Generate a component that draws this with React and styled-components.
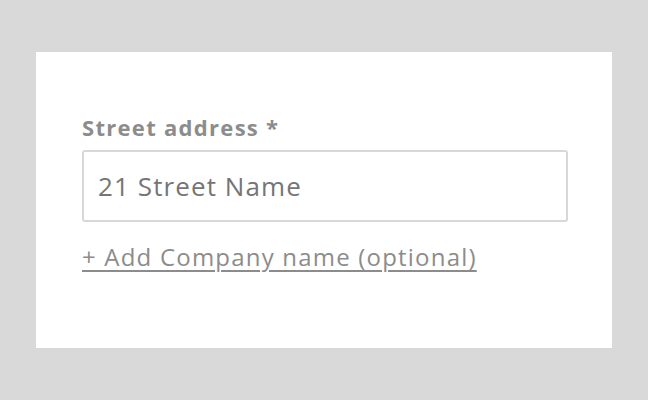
import React from "react";
import styled, { createGlobalStyle } from "styled-components";

const GlobalStyle = createGlobalStyle`
	html, body {
		margin: 0;
		padding: 0;
		background: #d9d9d9;
		font-family: "Open Sans", "Liberation Sans", sans-serif;
	}
`;

const Page = styled.div`
	padding: 52px 36px;
	width: 648px;
	height: 400px;
	box-sizing: border-box;
`;

const Card = styled.div`
	background: #fff;
	height: 296px;
	box-sizing: border-box;
	padding: 60px 44px 0 46px;
	display: flex;
	flex-direction: column;
`;

const Label = styled.label`
	font-size: 22px;
	font-weight: 700;
	letter-spacing: 1.3px;
	color: #8c8c8c;
	line-height: 30px;
	margin-bottom: 8px;
`;

const Input = styled.input`
	height: 72px;
	box-sizing: border-box;
	border: 2px solid #d8d8d8;
	border-radius: 3px;
	padding: 0 14px;
	font-family: inherit;
	font-size: 26px;
	letter-spacing: 1.1px;
	color: #555;
	outline: none;

	::placeholder {
		color: #8c8c8c;
	}
`;

const AddLink = styled.a`
	margin-top: 18px;
	align-self: flex-start;
	font-size: 24px;
	letter-spacing: 1.2px;
	line-height: 34px;
	color: #8c8c8c;
	text-decoration: underline;
	text-underline-offset: 4px;
	text-decoration-thickness: 2px;
	cursor: pointer;
`;

const App = () => {
	return (
		<Page>
			<GlobalStyle />
			<Card>
				<Label htmlFor="street">Street address *</Label>
				<Input id="street" placeholder="21 Street Name" />
				<AddLink>+ Add Company name (optional)</AddLink>
			</Card>
		</Page>
	);
};

export default App;
